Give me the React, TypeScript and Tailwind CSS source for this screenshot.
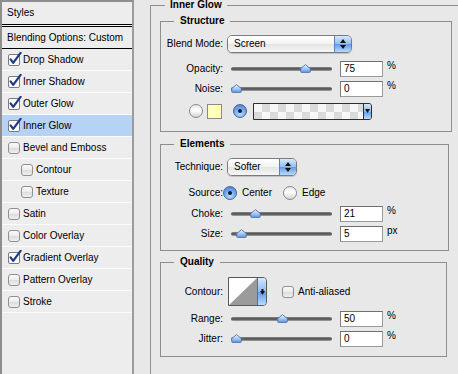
import React from "react";

type Item = { t: string; c?: boolean; sel?: boolean; ind?: boolean };

const items: Item[] = [
  { t: "Drop Shadow", c: true },
  { t: "Inner Shadow", c: true },
  { t: "Outer Glow", c: true },
  { t: "Inner Glow", c: true, sel: true },
  { t: "Bevel and Emboss" },
  { t: "Contour", ind: true },
  { t: "Texture", ind: true },
  { t: "Satin" },
  { t: "Color Overlay" },
  { t: "Gradient Overlay", c: true },
  { t: "Pattern Overlay" },
  { t: "Stroke" },
];

function CheckedBox() {
  return (
    <svg width="14" height="14" viewBox="0 0 14 14" className="shrink-0 -mt-[2px]">
      <rect x="0.5" y="2.5" width="11" height="11" rx="1.5" fill="#fdfdfd" stroke="#7a7a7a" />
      <path d="M2.6 7.4 L5.2 10.8 L12.6 0.8" fill="none" stroke="#1d3a86" strokeWidth="2.2" strokeLinecap="round" strokeLinejoin="round" />
    </svg>
  );
}

function EmptyBox() {
  return (
    <div className="w-[12px] h-[12px] shrink-0 mr-[2px] rounded-[3px] border border-[#8f8f8f] bg-[linear-gradient(#fbfbfb,#ececec_50%,#dcdcdc_51%,#f0f0f0)]" />
  );
}

function LeftPanel() {
  return (
    <div className="w-[134px] h-[380px] shrink-0 flex flex-col bg-[#ededed] border-l-2 border-t-2 border-r-2 border-[#8e8e8e] border-r-[#9c9c9c]">
      <div className="h-[23px] flex items-center pl-[5px] border-b border-black">Styles</div>
      <div className="h-[1px] bg-[#f4f4f4]" />
      <div className="h-[23px] flex items-center pl-[5px] border-t border-b border-black">Blending Options: Custom</div>
      {items.map((it) => (
        <div
          key={it.t}
          className={`h-[22px] flex items-center border-b border-[#fbfbfb] ${it.ind ? "pl-[19px]" : "pl-[6px]"} ${it.sel ? "bg-[#b6d3f6]" : ""}`}
        >
          {it.c ? <CheckedBox /> : <EmptyBox />}
          <span className="ml-[1px]">{it.t}</span>
        </div>
      ))}
    </div>
  );
}

function Label({ children }: { children: React.ReactNode }) {
  return <div className="w-[62px] shrink-0 text-right">{children}</div>;
}

function Popup({ text, wide }: { text: string; wide?: boolean }) {
  return (
    <div
      className={`flex h-[18px] ${wide ? "w-[125px]" : "w-[70px]"} rounded-[5px] border border-[#7b7b7b] overflow-hidden shadow-[0_1px_1px_rgba(0,0,0,0.18)]`}
    >
      <div className="flex-1 flex items-center pl-[6px] bg-[linear-gradient(#ffffff,#f3f3f3_50%,#e4e4e4_51%,#f6f6f6)]">{text}</div>
      <div className="w-[17px] border-l border-[#5d80b8] bg-[linear-gradient(#d6e8fd,#93bdf2_50%,#5f9ae9_51%,#b8dbff)] flex flex-col items-center justify-center gap-[2px]">
        <svg width="6" height="4" viewBox="0 0 6 4">
          <path d="M3 0L6 4H0Z" fill="#111" />
        </svg>
        <svg width="6" height="4" viewBox="0 0 6 4">
          <path d="M0 0H6L3 4Z" fill="#111" />
        </svg>
      </div>
    </div>
  );
}

function Radio({ on }: { on?: boolean }) {
  return on ? (
    <div className="w-[14px] h-[14px] shrink-0 rounded-full border border-[#46679f] bg-[radial-gradient(circle_at_50%_75%,#b9dbff,#6ea3ec_55%,#3e71c4)] flex items-center justify-center">
      <div className="w-[4px] h-[4px] rounded-full bg-[#0e1a30]" />
    </div>
  ) : (
    <div className="w-[14px] h-[14px] shrink-0 rounded-full border border-[#8a8a8a] bg-[linear-gradient(#e9e9e9,#ffffff_45%,#d3d3d3)]" />
  );
}

function Slider({ v }: { v: number }) {
  return (
    <div className="relative w-[101px] h-[16px] shrink-0 flex items-center">
      <div className="w-full h-[4px] rounded-full bg-[linear-gradient(#8a8a8a,#4c4c4c_50%,#a8a8a8)]" />
      <svg className="absolute top-[3px]" style={{ left: Math.round(v * 0.92) }} width="11" height="9" viewBox="0 0 11 9">
        <defs>
          <linearGradient id="thumbg" x1="0" y1="0" x2="0" y2="1">
            <stop offset="0" stopColor="#e6f1ff" />
            <stop offset="0.5" stopColor="#a9ccf7" />
            <stop offset="1" stopColor="#5f94e0" />
          </linearGradient>
        </defs>
        <path d="M5.5 0.6 L10.3 4.6 V7.6 Q10.3 8.4 9.5 8.4 H1.5 Q0.7 8.4 0.7 7.6 V4.6 Z" fill="url(#thumbg)" stroke="#4d73ad" strokeWidth="0.9" />
      </svg>
    </div>
  );
}

function Num({ v }: { v: string }) {
  return (
    <div className="w-[43px] h-[16px] shrink-0 bg-white border border-[#9a9a9a] border-t-[#6f6f6f] border-l-[#7d7d7d] flex items-center pl-[3px]">
      {v}
    </div>
  );
}

function SliderRow({ label, v, unit, cls }: { label: string; v: number; unit: string; cls: string }) {
  return (
    <div className={`flex items-center h-[16px] ${cls}`}>
      <Label>{label}</Label>
      <div className="ml-[8px]">
        <Slider v={v} />
      </div>
      <div className="ml-[8px]">
        <Num v={String(v)} />
      </div>
      <div className="ml-[4px] self-start leading-[10px]">{unit}</div>
    </div>
  );
}

function DownArrow() {
  return (
    <svg width="5" height="6" viewBox="0 0 5 6">
      <rect x="1.5" y="0" width="2" height="2" fill="#111" />
      <path d="M0 2H5L2.5 6Z" fill="#111" />
    </svg>
  );
}

export default function App() {
  return (
    <div className="w-[458px] h-[374px] overflow-hidden bg-[#e8e8e8] flex text-[10px] leading-[12px] text-black font-['Liberation_Sans',Arial,sans-serif]">
      <LeftPanel />
      <fieldset className="ml-[16px] w-[330px] h-[390px] shrink-0 border-l border-t border-[#8e8e8e]">
        <legend className="ml-[14px] px-[5px] font-bold leading-[10px]">Inner Glow</legend>
        <div className="pl-[9px] flex flex-col">
          {/* Structure */}
          <fieldset className="mt-[6px] w-[292px] border border-[#8e8e8e]">
            <legend className="ml-[13px] px-[6px] font-bold leading-[10px]">Structure</legend>
            <div className="flex flex-col pt-[9px] pb-[11px]">
              <div className="flex items-center h-[18px]">
                <Label>Blend Mode:</Label>
                <div className="ml-[4px]">
                  <Popup text="Screen" wide />
                </div>
              </div>
              <SliderRow cls="mt-[8px]" label="Opacity:" v={75} unit="%" />
              <SliderRow cls="mt-[4px]" label="Noise:" v={0} unit="%" />
              <div className="mt-[5px] flex items-center h-[18px] pl-[28px]">
                <Radio />
                <div className="ml-[4px] w-[15px] h-[15px] bg-[#ffffbd] border border-[#8a8a8a]" />
                <div className="ml-[11px]">
                  <Radio on />
                </div>
                <div className="ml-[6px] flex h-[17px] w-[119px] border border-[#2e2e2e] rounded-r-[3px] overflow-hidden">
                  <div className="flex-1 bg-[repeating-conic-gradient(#dadada_0_25%,#f6f6f6_0_50%)] bg-[length:16px_16px]" />
                  <div className="w-[8px] border-l border-[#2e2e2e] bg-[linear-gradient(#d6e8fd,#8fbaf2_50%,#5f9ae9_51%,#b8dbff)] flex items-center justify-center">
                    <svg width="5" height="4" viewBox="0 0 5 4">
                      <path d="M0 0H5L2.5 4Z" fill="#111" />
                    </svg>
                  </div>
                </div>
              </div>
            </div>
          </fieldset>

          {/* Elements */}
          <fieldset className="mt-[7px] w-[289px] border border-[#8e8e8e]">
            <legend className="ml-[13px] px-[6px] font-bold leading-[10px]">Elements</legend>
            <div className="flex flex-col pt-[9px] pb-[8px]">
              <div className="flex items-center h-[18px]">
                <Label>Technique:</Label>
                <div className="ml-[4px]">
                  <Popup text="Softer" />
                </div>
              </div>
              <div className="mt-[9px] flex items-center h-[16px]">
                <Label>Source:</Label>
                <Radio on />
                <span className="ml-[5px]">Center</span>
                <div className="ml-[11px]">
                  <Radio />
                </div>
                <span className="ml-[5px]">Edge</span>
              </div>
              <SliderRow cls="mt-[5px]" label="Choke:" v={21} unit="%" />
              <SliderRow cls="mt-[4px]" label="Size:" v={5} unit="px" />
            </div>
          </fieldset>

          {/* Quality */}
          <fieldset className="mt-[6px] w-[287px] border border-[#8e8e8e]">
            <legend className="ml-[13px] px-[6px] font-bold leading-[10px]">Quality</legend>
            <div className="flex flex-col pt-[10px] pb-[9px]">
              <div className="flex items-center h-[29px]">
                <Label>Contour:</Label>
                <div className="ml-[5px] flex w-[39px] h-[29px] border border-[#5a5a5a] rounded-r-[4px] overflow-hidden">
                  <svg width="28" height="27" viewBox="0 0 28 27" className="shrink-0">
                    <rect width="28" height="27" fill="#ffffff" />
                    <path d="M0 27 L28 0 L28 27 Z" fill="#9b9b9b" />
                  </svg>
                  <div className="flex-1 border-l border-[#4d70aa] bg-[linear-gradient(#d6e8fd,#8fbaf2_50%,#5f9ae9_51%,#b8dbff)] flex items-center justify-center">
                    <DownArrow />
                  </div>
                </div>
                <div className="ml-[15px] w-[12px] h-[12px] rounded-[3px] border border-[#8f8f8f] bg-[linear-gradient(#fbfbfb,#ececec_50%,#dcdcdc_51%,#f0f0f0)]" />
                <span className="ml-[4px]">Anti-aliased</span>
              </div>
              <SliderRow cls="mt-[5px]" label="Range:" v={50} unit="%" />
              <SliderRow cls="mt-[4px]" label="Jitter:" v={0} unit="%" />
            </div>
          </fieldset>
        </div>
      </fieldset>
    </div>
  );
}
